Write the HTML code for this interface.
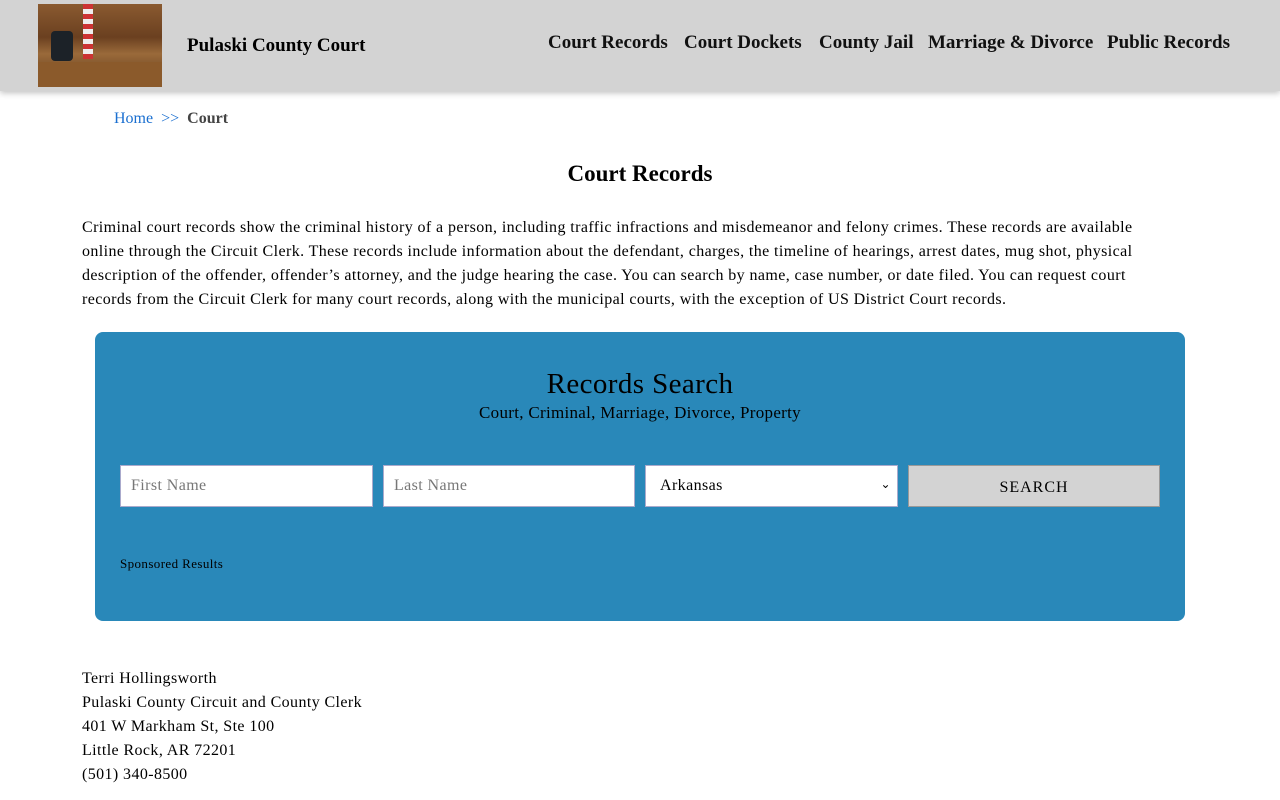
<!DOCTYPE html>
<html><head><meta charset="utf-8"><style>
*{box-sizing:border-box}
body{margin:0;width:1280px;height:800px;overflow:hidden;background:#fff;font-family:"Liberation Serif",serif;color:#000;letter-spacing:.4px}
.hdr{position:absolute;left:0;top:0;width:1280px;height:91px;background:#d3d3d3;box-shadow:0 2px 6px rgba(0,0,0,.25)}
.logo{position:absolute;left:38px;top:4px;width:124px;height:83px;background:linear-gradient(180deg,#8a5a30 0%,#6b4020 40%,#9a6a3a 60%,#5a3518 100%)}
.chair{position:absolute;left:13px;top:27px;width:22px;height:30px;background:#1c2228;border-radius:4px}
.flag{position:absolute;left:45px;top:0;width:10px;height:55px;background:repeating-linear-gradient(180deg,#c33 0 5px,#eee 5px 10px)}
.desk{position:absolute;left:0;top:58px;width:124px;height:25px;background:#8b5a2b}
.site{position:absolute;left:187px;top:35px;font-size:19px;font-weight:bold;letter-spacing:0}
.nav{position:absolute;top:32px;font-size:19px;font-weight:bold;color:#111;letter-spacing:0}
.bc{position:absolute;left:114px;top:110px;font-size:16px;letter-spacing:0}
.bc a{color:#1a6fd0}
h1{position:absolute;left:0;width:1280px;top:161px;margin:0;text-align:center;font-size:23px;letter-spacing:0}
.p{position:absolute;left:82px;top:216px;width:1090px;font-size:16px;line-height:24px}
.box{position:absolute;left:95px;top:332px;width:1090px;height:289px;background:#2988b9;border-radius:8px}
.box h2{position:absolute;top:36px;width:100%;text-align:center;margin:0;font-weight:normal;font-size:29px}
.sub{position:absolute;top:71px;width:100%;text-align:center;font-size:17px;letter-spacing:.3px}
.in{position:absolute;top:133px;height:42px;background:#fff;border:1px solid #aac;font-size:16px;color:#777;padding:11px 10px}
.btn{position:absolute;top:133px;left:813px;width:252px;height:42px;background:#d3d3d3;border:1px solid #999;text-align:center;font-size:16px;letter-spacing:1px;padding-top:13px}
.spon{position:absolute;left:25px;top:224px;font-size:13px}
.addr{position:absolute;left:82px;top:667px;font-size:16px;line-height:24px}
</style></head><body>
<div class="hdr"><div class="logo"><div class="desk"></div><div class="chair"></div><div class="flag"></div></div>
<div class="site">Pulaski County Court</div>
<div class="nav" style="left:548px">Court Records</div>
<div class="nav" style="left:684px">Court Dockets</div>
<div class="nav" style="left:819px">County Jail</div>
<div class="nav" style="left:928px">Marriage &amp; Divorce</div>
<div class="nav" style="left:1107px">Public Records</div></div>
<div class="bc"><a>Home</a> &nbsp;<a>&gt;&gt;</a> &nbsp;<b style="color:#444">Court</b></div>
<h1>Court Records</h1>
<div class="p">Criminal court records show the criminal history of a person, including traffic infractions and misdemeanor and felony crimes. These records are available online through the Circuit Clerk. These records include information about the defendant, charges, the timeline of hearings, arrest dates, mug shot, physical description of the offender, offender’s attorney, and the judge hearing the case. You can search by name, case number, or date filed. You can request court records from the Circuit Clerk for many court records, along with the municipal courts, with the exception of US District Court records.</div>
<div class="box"><h2>Records Search</h2><div class="sub">Court, Criminal, Marriage, Divorce, Property</div>
<div class="in" style="left:25px;width:253px">First Name</div>
<div class="in" style="left:288px;width:252px">Last Name</div>
<div class="in" style="left:550px;width:253px;color:#000;padding-left:14px">Arkansas<span style="position:absolute;right:6px;top:11px;font-size:12px">⌄</span></div>
<div class="btn">SEARCH</div>
<div class="spon">Sponsored Results</div></div>
<div class="addr">Terri Hollingsworth<br>Pulaski County Circuit and County Clerk<br>401 W Markham St, Ste 100<br>Little Rock, AR 72201<br>(501) 340-8500</div>
</body></html>
